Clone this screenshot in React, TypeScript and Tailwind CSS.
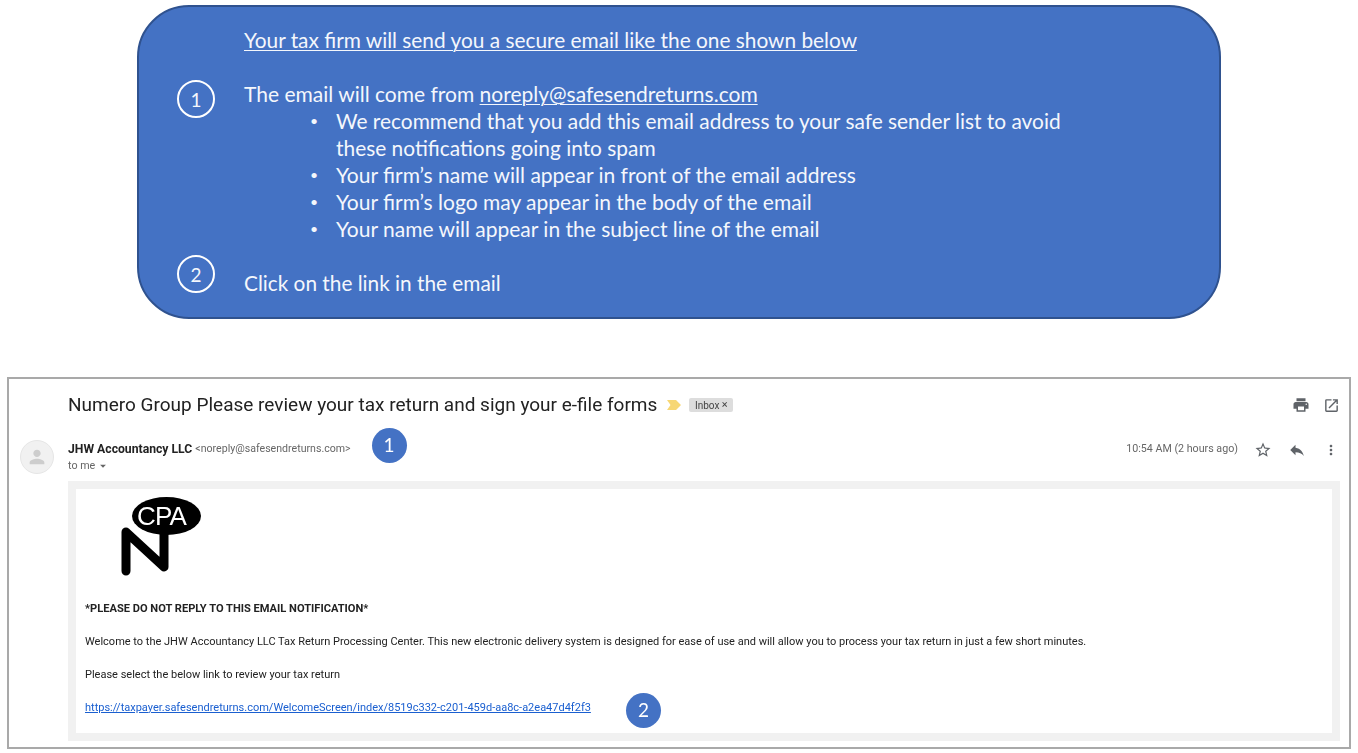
import React from "react";
import { MdPrint, MdOpenInNew, MdReply, MdMoreVert, MdStarBorder, MdPerson, MdArrowDropDown } from "react-icons/md";

const bullets = [
  ["We recommend that you add this email address to your safe sender list to avoid", "these notifications going into spam"],
  ["Your firm’s name will appear in front of the email address"],
  ["Your firm’s logo may appear in the body of the email"],
  ["Your name will appear in the subject line of the email"],
];

function Logo() {
  return (
    <svg width="90" height="86" viewBox="0 0 90 86" className="block">
      <path d="M5 76V37L43 72V25" fill="none" stroke="#000" strokeWidth="9" strokeLinecap="round" strokeLinejoin="round" />
      <ellipse cx="45.5" cy="21" rx="34.5" ry="19" fill="#000" />
      <text x="16" y="30" fill="#fff" fontSize="26" fontFamily="'Liberation Sans', sans-serif" letterSpacing="-0.8">CPA</text>
    </svg>
  );
}

export default function App() {
  return (
    <div className="w-[1358px] h-[753px] bg-white overflow-hidden pt-[5px]">
      <section className="ml-[137px] w-[1084px] h-[314px] rounded-[52px] border-2 border-[#2f528f] bg-[#4472c4] text-[#f4f7fc] flex font-['Lato',sans-serif] text-[21px] leading-[27px]">
        <div className="w-[38px] ml-[38px] shrink-0 flex flex-col pt-[73px]">
          <div className="w-[38px] h-[38px] rounded-full border-2 border-white flex items-center justify-center text-[19px]">1</div>
          <div className="w-[38px] h-[38px] rounded-full border-2 border-white flex items-center justify-center text-[19px] mt-[137px]">2</div>
        </div>
        <div className="ml-[29px] pt-[19px]">
          <p className="underline underline-offset-2 decoration-1 text-[20.85px]">Your tax firm will send you a secure email like the one shown below</p>
          <p className="mt-[27px]">The email will come from <span className="underline underline-offset-2 decoration-1">noreply@safesendreturns.com</span></p>
          <ul className="ml-[66px]">
            {bullets.map((b, i) => (
              <li key={b[0]} className="flex">
                <span className="w-[26px] shrink-0 text-[14px]">•</span>
                <span>
                  {b.map((l) => (
                    <span key={l} className={i === 0 ? "block text-[20.9px]" : "block"}>{l}</span>
                  ))}
                </span>
              </li>
            ))}
          </ul>
          <p className="mt-[27px] text-[20.8px]">Click on the link in the email</p>
        </div>
      </section>

      <section className="ml-[7px] mt-[58px] w-[1344px] h-[372px] border-2 border-[#a9a9a9] bg-white font-['Roboto',sans-serif] blur-[0.4px]">
        <div className="h-[55px] flex items-center pl-[59px] pr-[9px] pb-[3px]">
          <h1 className="text-[19px] text-[#222]">Numero Group Please review your tax return and sign your e-file forms</h1>
          <svg width="14" height="10" viewBox="0 0 14 10" className="ml-[10px]">
            <path d="M0 0H9L14 5L9 10H0L3.5 5Z" fill="#f7d774" />
          </svg>
          <span className="ml-[8px] h-[14px] w-[44px] rounded-[2px] bg-[#ddd] text-[#444] text-[10px] flex items-center justify-center">Inbox&nbsp;<span className="text-[11px]">×</span></span>
          <MdPrint className="ml-auto text-[#5f6368]" size={18} />
          <MdOpenInNew className="ml-[13px] text-[#5f6368]" size={17} />
        </div>

        <div className="flex pl-[11px] pr-[10px] h-[47px]">
          <div className="w-[34px] h-[34px] mt-[6px] rounded-full bg-[#f1f1f1] border border-[#e6e6e6] flex items-center justify-center text-[#cdcdcd]">
            <MdPerson size={22} />
          </div>
          <div className="ml-[14px] pt-[7px] leading-[16px]">
            <div className="flex items-center h-[16px]">
              <span className="text-[12.2px] font-bold text-[#222]">JHW Accountancy LLC</span>
              <span className="ml-[3px] text-[10.6px] text-[#666]">&lt;noreply@safesendreturns.com&gt;</span>
            </div>
            <div className="flex items-center text-[10.7px] text-[#666] mt-[1px]">
              to me
              <MdArrowDropDown size={14} className="ml-[1px]" />
            </div>
          </div>
          <div className="ml-[21px] -mt-[6px] w-[35px] h-[35px] rounded-full bg-[#4472c4] text-white flex items-center justify-center text-[19px] font-['Lato',sans-serif]">1</div>
          <span className="ml-auto mt-[7px] h-[16px] leading-[16px] text-[10.7px] text-[#666]">10:54 AM (2 hours ago)</span>
          <MdStarBorder size={18} className="ml-[16px] mt-[7px] text-[#5f6368]" />
          <MdReply size={18} className="ml-[16px] mt-[7px] text-[#5f6368]" />
          <MdMoreVert size={16} className="ml-[17px] mt-[8px] text-[#5f6368]" />
        </div>

        <div className="ml-[59px] mr-[9px] h-[260px] bg-[#f1f1f1] p-[8px]">
          <div className="h-[244px] bg-white pl-[9px] text-[11px] text-[#222]">
            <div className="pt-[6px] pl-[36px]"><Logo /></div>
            <p className="font-bold mt-[20px] h-[16px] leading-[16px] text-[11.1px]">*PLEASE DO NOT REPLY TO THIS EMAIL NOTIFICATION*</p>
            <p className="mt-[17px] h-[16px] leading-[16px]">Welcome to the JHW Accountancy LLC Tax Return Processing Center. This new electronic delivery system is designed for ease of use and will allow you to process your tax return in just a few short minutes.</p>
            <p className="mt-[17px] h-[16px] leading-[16px]">Please select the below link to review your tax return</p>
            <div className="mt-[16px] flex items-center h-[18px]">
              <a className="text-[#1a5fd0] underline">https://taxpayer.safesendreturns.com/WelcomeScreen/index/8519c332-c201-459d-aa8c-a2ea47d4f2f3</a>
              <span className="ml-[35px] mt-[4px] w-[35px] h-[35px] rounded-full bg-[#4472c4] text-white flex items-center justify-center text-[19px] font-['Lato',sans-serif] shrink-0">2</span>
            </div>
          </div>
        </div>
      </section>
    </div>
  );
}
